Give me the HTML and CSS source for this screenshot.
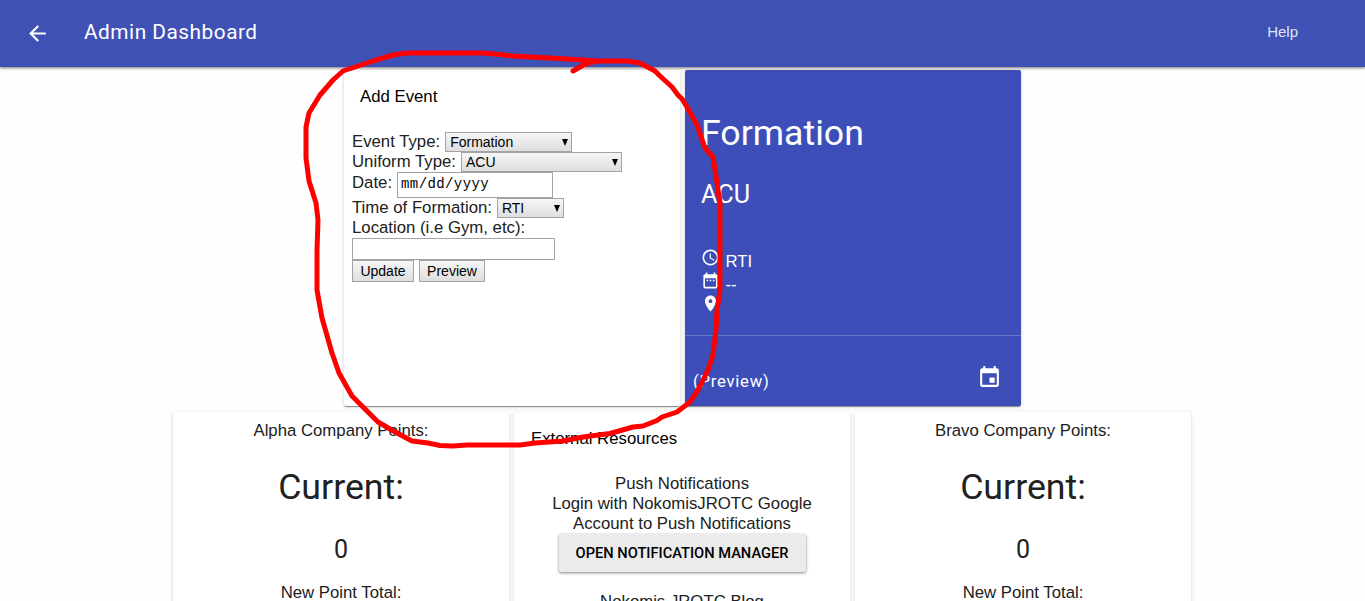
FILE: index.html
```html
<!DOCTYPE html>
<html lang="en">
<head>
<meta charset="utf-8">
<title>Admin Dashboard</title>
<link rel="stylesheet" href="styles.css">
</head>
<body>
<header class="toolbar">
  <svg class="back" viewBox="0 0 24 24"><path d="M20 11H7.83l5.59-5.59L12 4l-8 8 8 8 1.41-1.41L7.83 13H20v-2z"/></svg>
  <h1 class="toolbar-title">Admin Dashboard</h1>
  <a class="help">Help</a>
</header>
<main>
  <div class="row">
    <section class="card event">
      <h2 class="card-title">Add Event</h2>
      <form class="form">
        <div class="line"><span class="t-event">Event Type:</span><span class="select s-event">Formation<svg viewBox="0 0 6 7"><path d="M0 0h6L3 7z"/></svg></span></div>
        <div class="line"><span class="t-uniform">Uniform Type:</span><span class="select s-uniform">ACU<svg viewBox="0 0 6 7"><path d="M0 0h6L3 7z"/></svg></span></div>
        <div class="line date-line"><span class="t-date">Date:</span><span class="date">mm/dd/yyyy</span></div>
        <div class="line"><span class="t-time">Time of Formation:</span><span class="select s-time">RTI<svg viewBox="0 0 6 7"><path d="M0 0h6L3 7z"/></svg></span></div>
        <div class="line"><span class="t-loc">Location (i.e Gym, etc):</span></div>
        <input class="location" type="text">
        <div class="buttons"><button class="b-update" type="button">Update</button><button class="b-preview" type="button">Preview</button></div>
      </form>
    </section>
    <section class="card blue">
      <div class="blue-body">
        <h2 class="formation"><span>Formation</span></h2>
        <h3 class="uniform"><span>ACU</span></h3>
        <div class="detail"><svg viewBox="0 0 24 24"><path d="M11.99 2C6.47 2 2 6.48 2 12s4.47 10 9.99 10C17.52 22 22 17.52 22 12S17.52 2 11.99 2zM12 20c-4.42 0-8-3.58-8-8s3.58-8 8-8 8 3.58 8 8-3.58 8-8 8zm.5-13H11v6l5.25 3.15.75-1.23-4.5-2.67z"/></svg><span>RTI</span></div>
        <div class="detail"><svg viewBox="0 0 24 24"><path d="M9 11H7v2h2v-2zm4 0h-2v2h2v-2zm4 0h-2v2h2v-2zm2-7h-1V2h-2v2H8V2H6v2H5c-1.11 0-1.99.9-1.99 2L3 20c0 1.1.89 2 2 2h14c1.1 0 2-.9 2-2V6c0-1.1-.9-2-2-2zm0 16H5V9h14v11z"/></svg><span>--</span></div>
        <div class="detail"><svg viewBox="0 0 24 24"><path d="M12 2C8.13 2 5 5.13 5 9c0 5.25 7 13 7 13s7-7.75 7-13c0-3.87-3.13-7-7-7zm0 9.500a2.500 2.500 0 0 1 0-5 2.500 2.500 0 0 1 0 5z"/></svg></div>
      </div>
      <div class="blue-foot"><span class="preview">(Preview)</span><svg viewBox="0 0 24 24"><path d="M17 12h-5v5h5v-5zM16 1v2H8V1H6v2H5c-1.11 0-1.990.9-1.990 2L3 19c0 1.100.890 2 2 2h14c1.100 0 2-.9 2-2V5c0-1.100-.9-2-2-2h-1V1h-2zm3 18H5V8h14v11z"/></svg></div>
    </section>
  </div>
  <div class="row lower">
    <section class="card points">
      <p class="company"><span>Alpha Company Points:</span></p>
      <h2 class="current"><span>Current:</span></h2>
      <h3 class="score">0</h3>
      <p class="total"><span>New Point Total:</span></p>
    </section>
    <section class="card resources">
      <h2 class="card-title">External Resources</h2>
      <p class="copy">Push Notifications<br>Login with NokomisJROTC Google<br>Account to Push Notifications</p>
      <button class="manager" type="button">OPEN NOTIFICATION MANAGER</button>
      <p class="copy blog">Nokomis JROTC Blog</p>
    </section>
    <section class="card points">
      <p class="company"><span>Bravo Company Points:</span></p>
      <h2 class="current"><span>Current:</span></h2>
      <h3 class="score">0</h3>
      <p class="total"><span>New Point Total:</span></p>
    </section>
  </div>
</main>
<svg class="marker" viewBox="0 0 1365 601"><path d="M573 71L585 64 597 61 583 60 550 58 513 56 500 54.500 483 53H408L395 54.500 373 61 343 71 333 80 320 95 309 113 306 127V158L309 181 316 203 318 220 317 250V290L322 318 332 353 339 373 352 396 368 412 378 422 397 433 412 441 428 443 440 445.500 453 446 467 445H520L535 443 563 441 583 437 610 433.500 633 427 643 426 657 420.500 662 417 677 412 690 402 698 390 708 370 713 355 716 330 717 310 720 290V203L717 183 713 157 705 148 697 125 687 107 682 99 678 95 672 87 660 76 655 71 640 63 628 61H597"/></svg>
</body>
</html>
```

FILE: styles.css
```css
* { box-sizing: border-box; }
html, body { height: 100%; }
body {
  margin: 0;
  overflow: hidden;
  background: #fefefe;
  color: #212121;
  font: 16.76px/20px "Liberation Sans", Arial, sans-serif;
}
h1, h2, h3, p { margin: 0; font-weight: 400; }
.toolbar {
  position: relative;
  display: flex;
  align-items: center;
  height: 67px;
  padding: 0 67px 0 25px;
  background: #3f51b5;
  color: #fff;
  box-shadow: 0 1px 3px rgba(0,0,0,.55);
}
.back { width: 25px; height: 25px; fill: #fff; }
.toolbar-title {
  margin: -3px auto 0 34px;
  font: 20.8px/28px Roboto, sans-serif;
  letter-spacing: .52px;
}
.help { font-size: 15px; margin-top: -3px; color: #e0e3f3; }
.row { display: flex; justify-content: center; gap: 5px; padding-top: 3px; }
.lower { padding-top: 6px; padding-right: 1px; }
.card {
  width: 336px;
  height: 336px;
  background: #fff;
  border-radius: 2px;
  box-shadow: 0 2px 1px -1px rgba(0,0,0,.28), 0 1px 1px rgba(0,0,0,.2), 0 1px 4px rgba(0,0,0,.14);
}
.card-title { padding: 16px 16px 0; font-size: 16.76px; line-height: 21px; color: #000; }
.form { padding: 25px 8px 0; }
.line { display: flex; align-items: center; height: 20px; gap: 5px; white-space: nowrap; }
.date-line { height: 26px; }
.date-line .t-date { align-self: flex-start; padding-top: 1px; }
.select {
  display: flex;
  align-items: center;
  justify-content: space-between;
  height: 20px;
  padding: 0 4px;
  border: 1px solid #a3a3a3;
  background: linear-gradient(#f6f6f6, #dedede);
  color: #000;
  font-size: 14px;
  line-height: 18px;
}
.select svg { width: 6px; height: 7px; margin-right: -1px; }
.s-event { width: 127px; }
.s-uniform { width: 161px; }
.s-time { width: 67px; }
.date {
  width: 156px;
  height: 26px;
  padding: 0 3px;
  border: 1px solid #a3a3a3;
  color: #000;
  font: 14px/23px "Liberation Mono", monospace;
  letter-spacing: .4px;
}
.location { display: block; width: 203px; height: 22px; border: 1px solid #a3a3a3; }
.buttons { display: flex; gap: 5px; }
.buttons button {
  height: 22px;
  padding: 0;
  border: 1px solid #a3a3a3;
  background: linear-gradient(#f6f6f6, #dedede);
  color: #000;
  font: 14px/20px "Liberation Sans", Arial, sans-serif;
}
.buttons .b-update { width: 62px; }
.buttons .b-preview { width: 66px; }
.blue { background: #3d4eb8; color: #fff; }
.blue-body { height: 266px; padding: 39px 16px 0; border-bottom: 1px solid #6773c8; }
.formation { font: 35.7px/48px Roboto, sans-serif; }
.uniform { margin-top: 22px; font: 25.2px/32px Roboto, sans-serif; }
.detail { display: flex; height: 23px; gap: 5.5px; }
.detail svg { width: 19px; height: 19px; fill: #fff; }
.detail span { padding-top: 4px; }
.uniform + .detail { margin-top: 37px; }
.blue-foot { display: flex; justify-content: space-between; padding: 29px 19.5px 0 8px; }
.blue-foot svg { width: 25px; height: 25px; fill: #fff; }
.preview { padding-top: 7px; font: 16.67px/20px Roboto, sans-serif; letter-spacing: .75px; }
.points { text-align: center; }
.company { padding-top: 9px; }
.current { margin-top: 22px; font: 35.7px/48px Roboto, sans-serif; }
.score { margin-top: 23px; font: 25px/32px Roboto, sans-serif; }
.total { margin-top: 17px; }
.resources { text-align: center; }
.resources .card-title { text-align: left; padding-left: 17px; }
.copy { margin-top: 25px; white-space: nowrap; }
.manager {
  width: 247px;
  height: 38px;
  padding: 0;
  border: 0;
  border-radius: 2px;
  background: #ebebeb;
  color: #000;
  font: 500 14.65px/38px Roboto, sans-serif;
  box-shadow: 0 1px 3px rgba(0,0,0,.5);
}
.blog { margin-top: 20px; }
.marker {
  position: absolute;
  left: 0;
  top: 0;
  width: 1365px;
  height: 601px;
  fill: none;
  stroke: #f00;
  stroke-width: 5;
  stroke-linecap: round;
  stroke-linejoin: round;
  pointer-events: none;
}
```
